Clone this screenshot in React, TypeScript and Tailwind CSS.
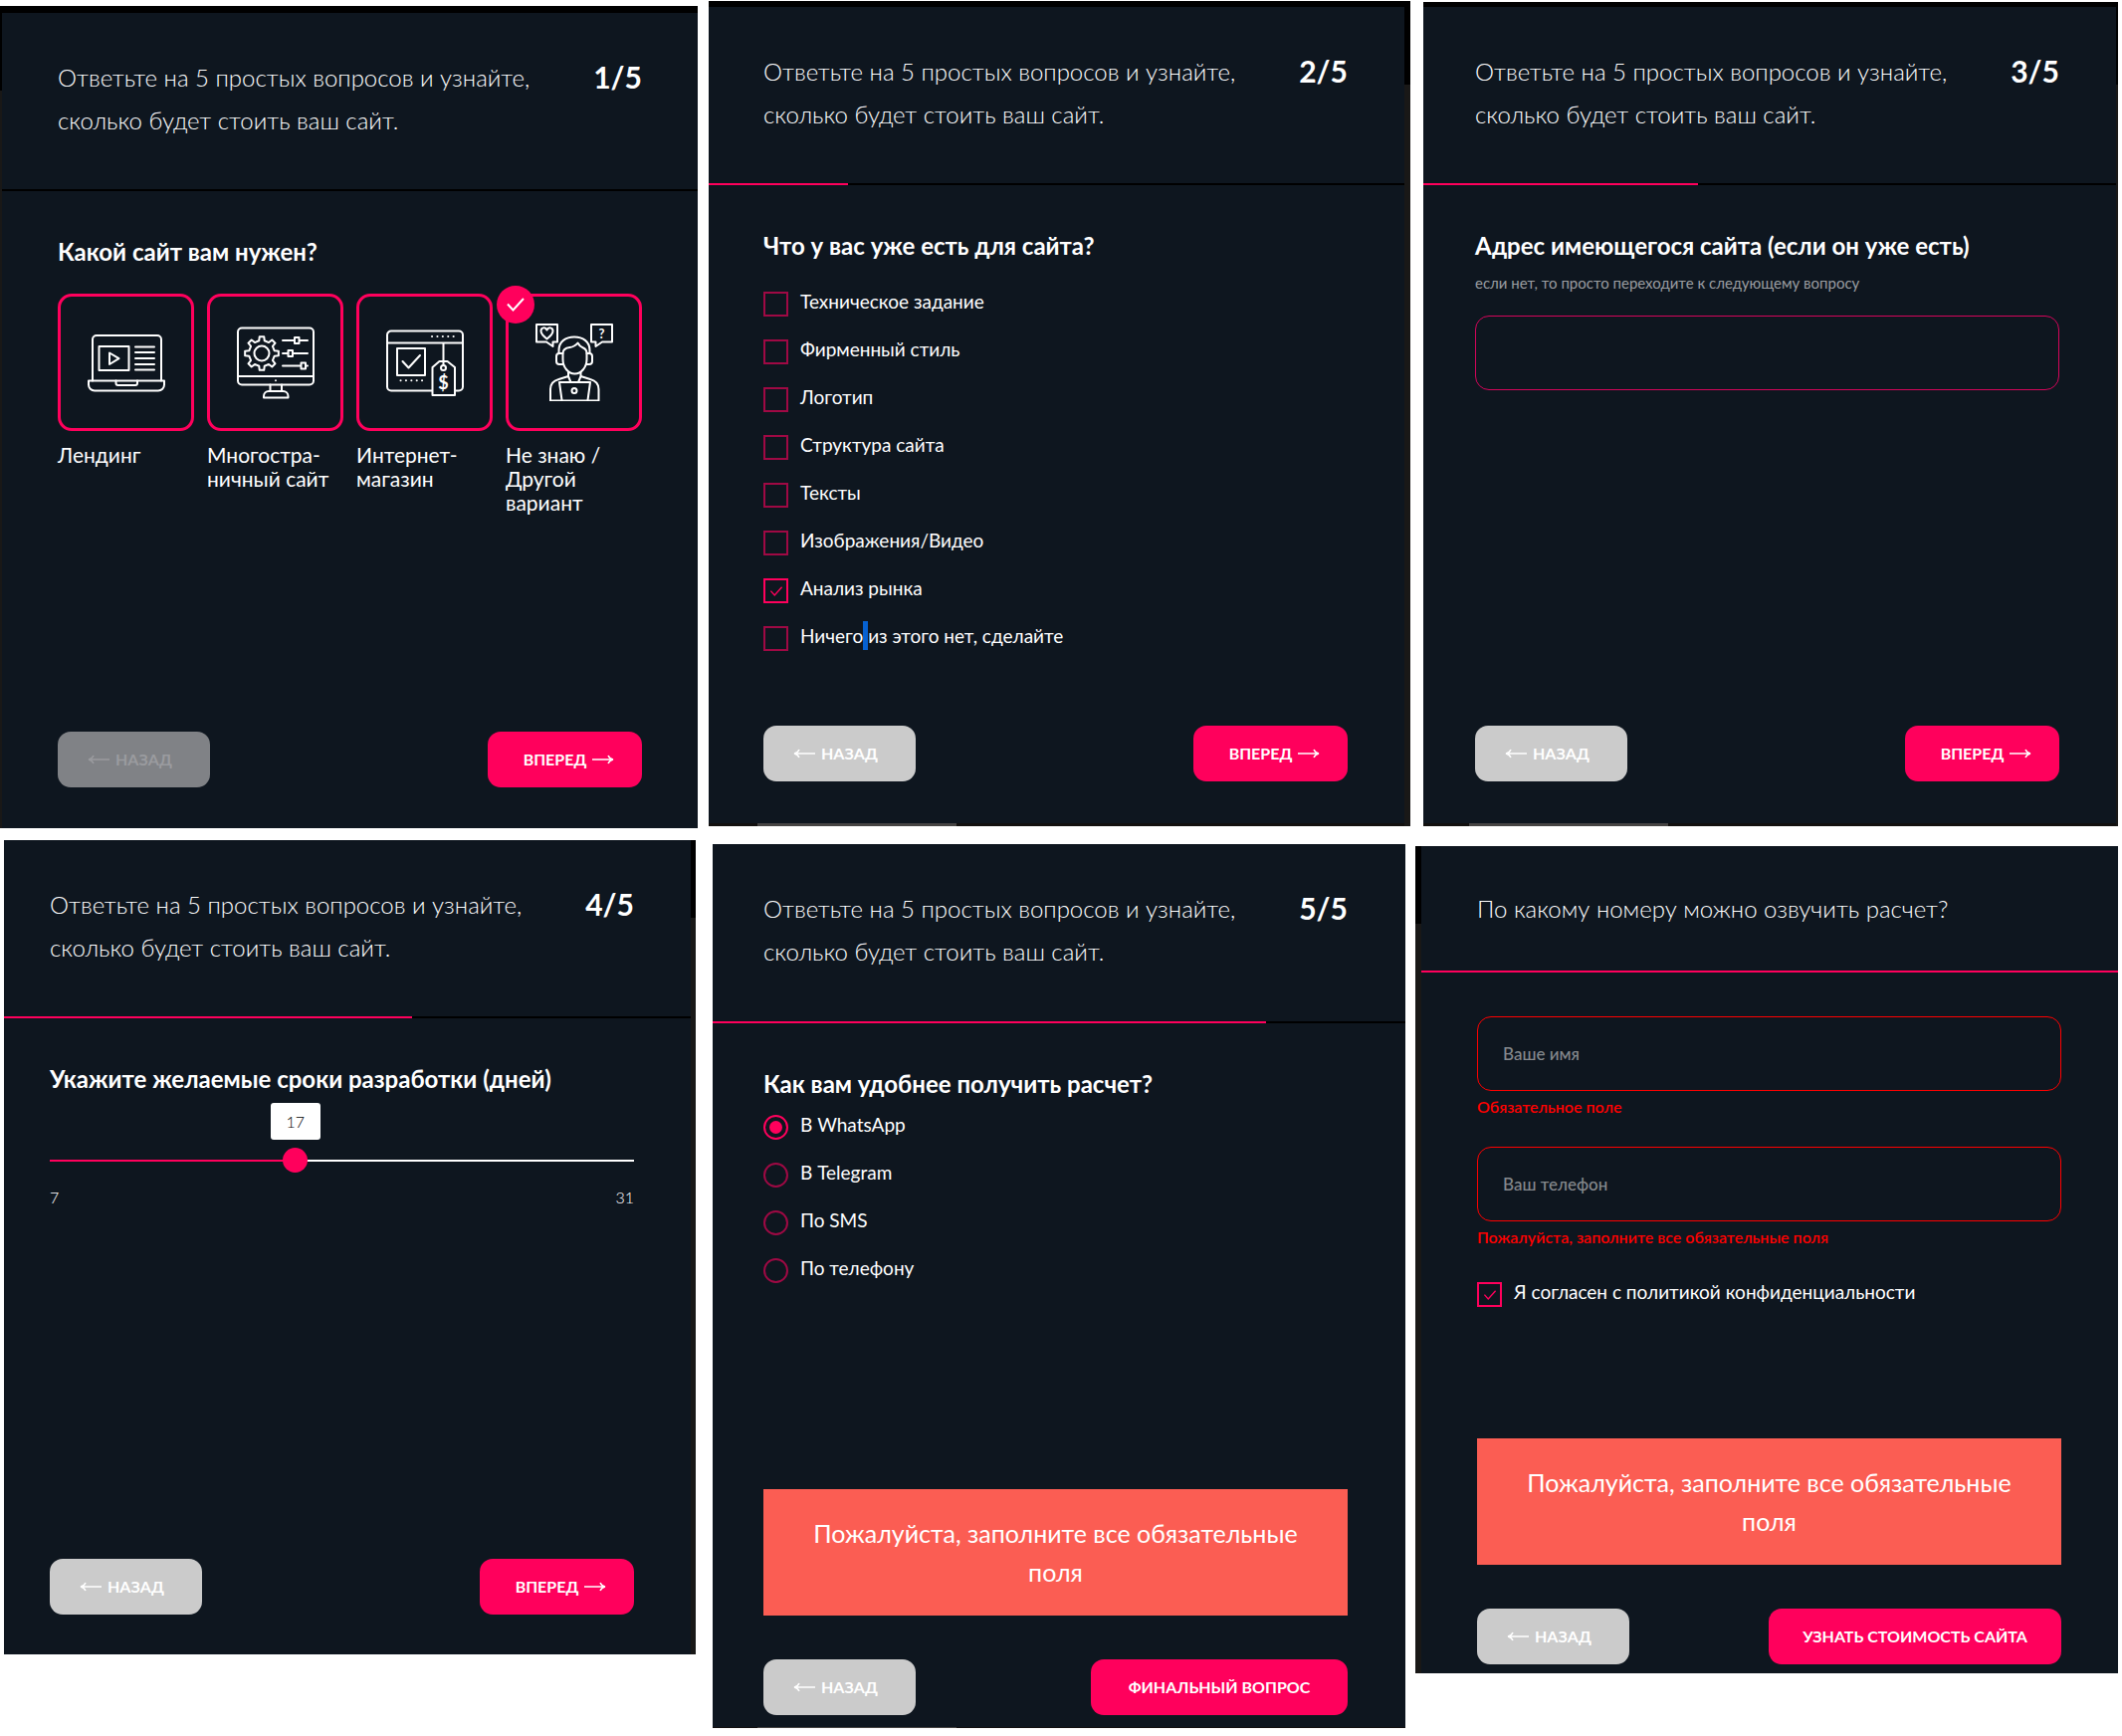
import { ReactNode, useState } from "react";
import clsx from "clsx";

const INTRO = "Ответьте на 5 простых вопросов и узнайте, сколько будет стоить ваш сайт.";

const ASSETS = [
  "Техническое задание",
  "Фирменный стиль",
  "Логотип",
  "Структура сайта",
  "Тексты",
  "Изображения/Видео",
  "Анализ рынка",
];

const CHANNELS = ["В WhatsApp", "В Telegram", "По SMS", "По телефону"];

function gearPath(cx: number, cy: number, inner: number, outer: number, teeth: number) {
  const step = (Math.PI * 2) / teeth;
  const point = (angle: number, radius: number) =>
    `${(cx + Math.cos(angle) * radius).toFixed(2)} ${(cy + Math.sin(angle) * radius).toFixed(2)}`;
  const parts: string[] = [];
  for (let i = 0; i < teeth; i++) {
    const a = i * step;
    parts.push(point(a - step * 0.27, inner), point(a - step * 0.17, outer), point(a + step * 0.17, outer), point(a + step * 0.27, inner));
  }
  return `M${parts.join("L")}Z`;
}

function IconFrame({ children }: { children: ReactNode }) {
  return (
    <svg viewBox="0 0 78 78" className="h-[78px] w-[78px]" fill="none" stroke="white" strokeWidth="2" strokeLinejoin="round" strokeLinecap="round" aria-hidden="true">
      {children}
    </svg>
  );
}

function LandingIcon() {
  return (
    <IconFrame>
      <path d="M5 57.500V16a4 4 0 0 1 4-4h61a4 4 0 0 1 4 4v41.500" />
      <path d="M1 57.500h76v4a6 6 0 0 1-6 6H7a6 6 0 0 1-6-6Z" />
      <path d="M28.500 57.500v2.500a2 2 0 0 0 2 2h17.500a2 2 0 0 0 2-2v-2.500" />
      <path d="M11.500 23h30v24h-30Z" />
      <path d="M22 29.500v11.500l9.500-5.800Z" />
      <path d="M48 23.500h19M48 29h19M48 35h19M48 41h19M48 46.500h19" />
    </IconFrame>
  );
}

function MultipageIcon() {
  return (
    <IconFrame>
      <rect x="1" y="4.500" width="76" height="57" rx="4" />
      <path d="M1 53h76M39 57.200v.1" />
      <path d="M33.500 61.500v6.500M45 61.500v6.500" />
      <path d="M27 74.500v-1.500a5 5 0 0 1 5-5h14.500a5 5 0 0 1 5 5v1.500Z" />
      <path d={gearPath(25, 30, 13, 17, 8)} />
      <circle cx="25" cy="30" r="7.500" />
      <path d="M46 17h12M63 17h8M46 30h5.500M56.500 30h14.500M46 42.500h18M69 42.500h2" />
      <path d="M58 14h4.500v6h-4.500ZM51.500 27h4.500v6h-4.500ZM64.500 39.500h4.500v6h-4.500Z" />
    </IconFrame>
  );
}

function ShopIcon() {
  return (
    <IconFrame>
      <path d="M46 67.500H5a4 4 0 0 1-4-4V11.500a4 4 0 0 1 4-4h68a4 4 0 0 1 4 4V63.500a4 4 0 0 1-4 4h-4" />
      <path d="M1 19.500h76M57.500 19.500v22" />
      <path d="M46 13h.1M51.400 13h.1M56.800 13h.1M62.200 13h.1M67.600 13h.1" />
      <path d="M14.500 57.300h.1M19.900 57.300h.1M25.300 57.300h.1M30.700 57.300h.1M36 57.300h.1" />
      <path d="M11 25h28v27H11Z" />
      <path d="m16.500 38 6 6.500L34 32" />
      <path d="M46.500 72V44l7-6h8l7.500 6v28Z" />
      <circle cx="57.500" cy="44.500" r="2.500" />
      <text x="57.500" y="66" textAnchor="middle" fill="white" stroke="none" className="font-['Lato',sans-serif] text-[18px] font-bold">$</text>
    </IconFrame>
  );
}

function UnknownIcon() {
  return (
    <IconFrame>
      <path d="M1 1h21v17.500h-4.500v4.500l-6.500-4.500H1Z" />
      <path d="M11.500 15.500C7 12 5.500 10 5.500 7.500c0-3.500 4.500-4.500 6-1 1.500-3.500 6-2.500 6 1 0 2.500-1.500 4.500-6 8Z" />
      <path d="M56 1h21v17.500H67l-6.500 4.500v-4.500H56Z" />
      <text x="66.500" y="14.500" textAnchor="middle" fill="white" stroke="none" className="font-['Lato',sans-serif] text-[13px] font-bold">?</text>
      <path d="M23.500 30v-3c0-9 7-13.500 15.500-13.500S54.500 18 54.500 27v3" />
      <path d="M27.500 30c0-4 3-5.500 7-6 4-.5 6-2 8-4.500 1.500 3 3 4 5.500 5 2.500 1 3.500 2.500 3.500 5.500v6c0 8-5.500 14.500-12 14.500S27.500 44 27.500 36Z" />
      <path d="M27.500 30H24a3 3 0 0 0-3 3v5a3 3 0 0 0 3 3h4M51.500 30H54a3 3 0 0 1 3 3v5a3 3 0 0 1-3 3h-3" />
      <path d="M33 49v4l-9.500 3c-5.500 1.500-8.500 4-8.500 10v11.500h48.500V66c0-6-3-8.500-8.500-10L45.500 53v-4M33 53l2.500 6M45.500 53 43 59" />
      <path d="M26.500 77 24 59h31l-2.500 18" />
      <circle cx="39" cy="67.500" r="2.500" />
    </IconFrame>
  );
}

const SITE_TYPES = [
  { id: "landing", label: "Лендинг", icon: <LandingIcon /> },
  { id: "multipage", label: "Многостра-ничный сайт", icon: <MultipageIcon /> },
  { id: "shop", label: "Интернет-магазин", icon: <ShopIcon /> },
  { id: "unknown", label: "Не знаю / Другой вариант", icon: <UnknownIcon /> },
];

function Arrow({ back }: { back?: boolean }) {
  return (
    <svg viewBox="0 0 22 10" className="h-[10px] w-[22px] shrink-0" fill="none" stroke="currentColor" strokeWidth="1.500" aria-hidden="true">
      {back ? <path d="M22 5H2M6 1C5 3 3.500 4.500 1 5c2.500.5 4 2 5 4" /> : <path d="M0 5h20M16 1c1 2 2.500 3.500 5 4-2.500.5-4 2-5 4" />}
    </svg>
  );
}

function Footer({ disabled, next, nextClass }: { disabled?: boolean; next?: string; nextClass?: string }) {
  return (
    <div className="flex justify-between text-[16px] font-bold">
      <button
        type="button"
        disabled={disabled}
        className={clsx(
          "flex h-14 w-[153px] items-center gap-1.5 rounded-[13px] pl-[30px]",
          disabled ? "bg-[#808286] text-[#9a9b9f]" : "bg-[#cbcbcb] text-white",
        )}
      >
        <Arrow back />
        НАЗАД
      </button>
      <button type="button" className={clsx("flex h-14 items-center justify-center gap-1.5 rounded-[13px] bg-[#ff005c] text-white", nextClass ?? "w-[155px] pl-2")}>
        {next ?? "ВПЕРЕД"}
        {!next && <Arrow />}
      </button>
    </div>
  );
}

function Notice() {
  return (
    <p role="alert" className="mb-11 bg-[#fb5d53] px-8 pt-[25px] pb-6 text-center text-[25px] leading-[39px]">
      Пожалуйста, заполните все обязательные поля
    </p>
  );
}

// Sliver of the dimmed page that stays visible beside the dialog.
function Edge({ className }: { className: string }) {
  return (
    <div className={clsx("flex flex-col bg-[#191817]", className)}>
      <div className="h-[78px] bg-black" />
    </div>
  );
}

interface PanelProps {
  title: string;
  step?: string;
  progress: number;
  inset: string;
  headerClass?: string;
  className: string;
  left?: ReactNode;
  right?: ReactNode;
  scrollbar?: string;
  children: ReactNode;
}

function Panel({ title, step, progress, inset, headerClass, className, left, right, scrollbar, children }: PanelProps) {
  return (
    <section className={clsx("flex border-black bg-[#0e161f] text-white", className)}>
      {left}
      <div className="flex min-w-0 flex-1 flex-col">
        <header className={clsx("flex justify-between text-[24px] leading-[43px]", headerClass ?? "min-h-[177px] pt-[43px]", inset)}>
          <h2 className="max-w-[490px] font-light">{title}</h2>
          {step && <span className="text-[30px] font-bold">{step}</span>}
        </header>
        <div className="h-0.5 bg-black">
          <div className="h-full bg-[#ff005c]" style={{ width: `${progress}%` }} />
        </div>
        <div className={clsx("flex flex-1 flex-col", inset)}>{children}</div>
        {scrollbar && (
          <div className="bg-[#12100f]">
            <div className={clsx("w-[200px] bg-[#464443]", scrollbar)} />
          </div>
        )}
      </div>
      {right}
    </section>
  );
}

function Question({ children }: { children: ReactNode }) {
  return <h3 className="pt-[45px] text-[24px] leading-8 font-bold">{children}</h3>;
}

function Tick({ className }: { className: string }) {
  return (
    <svg viewBox="0 0 20 20" className={className} fill="none" stroke="currentColor" strokeWidth="2" aria-hidden="true">
      <path d="m2 9.500 5.500 6L18 4" />
    </svg>
  );
}

function CheckRow({ children, checked }: { children: ReactNode; checked?: boolean }) {
  return (
    <label className="flex h-12 items-start gap-3 text-[19px] leading-6">
      <span className="relative mt-0.5 h-[25px] w-[25px] shrink-0">
        <input type="checkbox" defaultChecked={checked} className="peer block h-full w-full appearance-none border-2 border-[#9f0944] checked:border-[#ff005c]" />
        <Tick className="pointer-events-none absolute top-[6px] left-[6px] hidden h-[14px] w-[14px] text-[#ff005c] peer-checked:block" />
      </span>
      <span>{children}</span>
    </label>
  );
}

function TextField({ id, label, error }: { id: string; label: string; error: string }) {
  return (
    <div>
      <input
        id={id}
        type="text"
        placeholder={label}
        aria-label={label}
        aria-invalid="true"
        className="block h-[75px] w-full rounded-[14px] border border-[#ff0000] bg-transparent px-[25px] text-[17px] font-medium placeholder:text-[#85898d]"
      />
      <p className="mt-1 text-[16px] leading-6 font-semibold text-[#ff0000]">{error}</p>
    </div>
  );
}

export default function App() {
  const [days, setDays] = useState(17);
  const ratio = (days - 7) / 24;
  const thumb = `calc(${ratio * 100}% + ${12.5 - ratio * 25}px)`;

  return (
    <main className="grid grid-cols-[minmax(0,712fr)_minmax(0,710fr)_minmax(0,710fr)] items-start bg-white font-['Lato','Open_Sans',sans-serif]">
      <div className="flex flex-col gap-3 pt-1.5">
        <Panel
          title={INTRO}
          step="1/5"
          progress={0}
          inset="px-14"
          className="mr-[11px] min-h-[826px] border-t-[7px]"
          left={<Edge className="w-0.5" />}
        >
          <Question>Какой сайт вам нужен?</Question>
          <div className="mt-[26px] grid grid-cols-4 gap-[13px]">
            {SITE_TYPES.map((type) => (
              <label key={type.id} className="relative block text-[21px] leading-6">
                <input type="radio" name="site-type" defaultChecked={type.id === "unknown"} className="peer sr-only" />
                <span className="flex h-[138px] items-center justify-center rounded-[14px] border-[3px] border-[#ff005c]">{type.icon}</span>
                <span className="absolute -top-2 -left-[9px] hidden h-[38px] w-[38px] items-center justify-center rounded-full bg-[#ff005c] peer-checked:flex">
                  <Tick className="h-5 w-5" />
                </span>
                <span className="mt-3 block">{type.label}</span>
              </label>
            ))}
          </div>
          <div className="mt-auto pb-[41px]">
            <Footer disabled />
          </div>
        </Panel>

        <Panel
          title={INTRO}
          step="4/5"
          progress={59.4}
          inset="pl-[46px] pr-[57px]"
          className="mr-[13px] ml-1 min-h-[818px]"
          right={<Edge className="w-[5px]" />}
        >
          <Question>Укажите желаемые сроки разработки (дней)</Question>
          <div className="relative mt-[53px]">
            <output
              htmlFor="days"
              className="absolute -top-[45px] flex h-[37px] w-[50px] -translate-x-1/2 items-center justify-center rounded-[3px] bg-white text-[16px] font-light text-black"
              style={{ left: thumb }}
            >
              {days}
            </output>
            <input
              id="days"
              type="range"
              aria-label="Укажите желаемые сроки разработки (дней)"
              min={7}
              max={31}
              value={days}
              onChange={(e) => setDays(Number(e.target.value))}
              className="block h-[25px] w-full appearance-none bg-[length:100%_2px] bg-center bg-no-repeat [&::-webkit-slider-thumb]:h-[25px] [&::-webkit-slider-thumb]:w-[25px] [&::-webkit-slider-thumb]:appearance-none [&::-webkit-slider-thumb]:rounded-full [&::-webkit-slider-thumb]:bg-[#ff005c]"
              style={{ backgroundImage: `linear-gradient(to right, #ff005c ${thumb}, #ffffff ${thumb})` }}
            />
            <div className="mt-[13px] flex justify-between text-[16px] leading-6 font-light">
              <span>7</span>
              <span>31</span>
            </div>
          </div>
          <div className="mt-auto pb-10">
            <Footer />
          </div>
        </Panel>
      </div>

      <div className="flex flex-col gap-[18px] pt-px">
        <Panel
          title={INTRO}
          step="2/5"
          progress={20}
          inset="pl-[55px] pr-[57px]"
          className="mr-[5px] min-h-[829px] border-t-[6px]"
          right={<Edge className="w-1.5" />}
          scrollbar="ml-[49px] h-[3px]"
        >
          <Question>Что у вас уже есть для сайта?</Question>
          <div className="mt-7">
            {ASSETS.map((asset) => (
              <CheckRow key={asset} checked={asset === "Анализ рынка"}>
                {asset}
              </CheckRow>
            ))}
            <CheckRow>
              Ничего<span className="bg-[#0661d1] py-[3px]"> </span>из этого нет, сделайте
            </CheckRow>
          </div>
          <div className="mt-auto pb-[42px]">
            <Footer />
          </div>
        </Panel>

        <Panel
          title={INTRO}
          step="5/5"
          progress={79.9}
          inset="pl-[51px] pr-[58px]"
          headerClass="min-h-[178px] pt-[43px]"
          className="mr-[10px] ml-1 min-h-[888px]"
          scrollbar="ml-[45px] h-px"
        >
          <Question>Как вам удобнее получить расчет?</Question>
          <div className="mt-[13px]">
            {CHANNELS.map((channel, i) => (
              <label key={channel} className="flex h-12 items-start gap-3 text-[19px] leading-6">
                <input
                  type="radio"
                  name="channel"
                  defaultChecked={i === 0}
                  className="mt-0.5 h-[25px] w-[25px] shrink-0 appearance-none rounded-full border-2 border-[#9f0944] bg-clip-content p-1 checked:border-[#ff005c] checked:bg-[#ff005c]"
                />
                {channel}
              </label>
            ))}
          </div>
          <div className="mt-auto pb-3">
            <Notice />
            <Footer next="ФИНАЛЬНЫЙ ВОПРОС" nextClass="w-[258px]" />
          </div>
        </Panel>
      </div>

      <div className="flex flex-col gap-5 pt-0.5">
        <Panel
          title={INTRO}
          step="3/5"
          progress={39.7}
          inset="pl-[52px] pr-[57px]"
          className="mr-1 ml-2 min-h-[828px] border-t-[5px]"
          right={<Edge className="w-0.5" />}
          scrollbar="ml-[46px] h-[3px]"
        >
          <Question>Адрес имеющегося сайта (если он уже есть)</Question>
          <label htmlFor="address" className="mt-[9px] text-[15px] leading-6 text-[#9a9da1]">
            если нет, то просто переходите к следующему вопросу
          </label>
          <input id="address" type="text" className="mt-[21px] h-[75px] w-full rounded-[14px] border border-[#d4055a] bg-transparent px-[25px] text-[17px]" />
          <div className="mt-auto pb-[42px]">
            <Footer />
          </div>
        </Panel>

        <Panel
          title="По какому номеру можно озвучить расчет?"
          progress={100}
          inset="pl-14 pr-[57px]"
          headerClass="min-h-[125px] pt-[41px]"
          className="mr-1 min-h-[831px]"
          left={<Edge className="w-1.5" />}
        >
          <div className="flex flex-col gap-7 pt-11">
            <TextField id="name" label="Ваше имя" error="Обязательное поле" />
            <TextField id="phone" label="Ваш телефон" error="Пожалуйста, заполните все обязательные поля" />
          </div>
          <div className="mt-[31px]">
            <CheckRow checked>Я согласен с политикой конфиденциальности</CheckRow>
          </div>
          <div className="mt-auto pb-[9px]">
            <Notice />
            <Footer next="УЗНАТЬ СТОИМОСТЬ САЙТА" nextClass="w-[294px]" />
          </div>
        </Panel>
      </div>
    </main>
  );
}
